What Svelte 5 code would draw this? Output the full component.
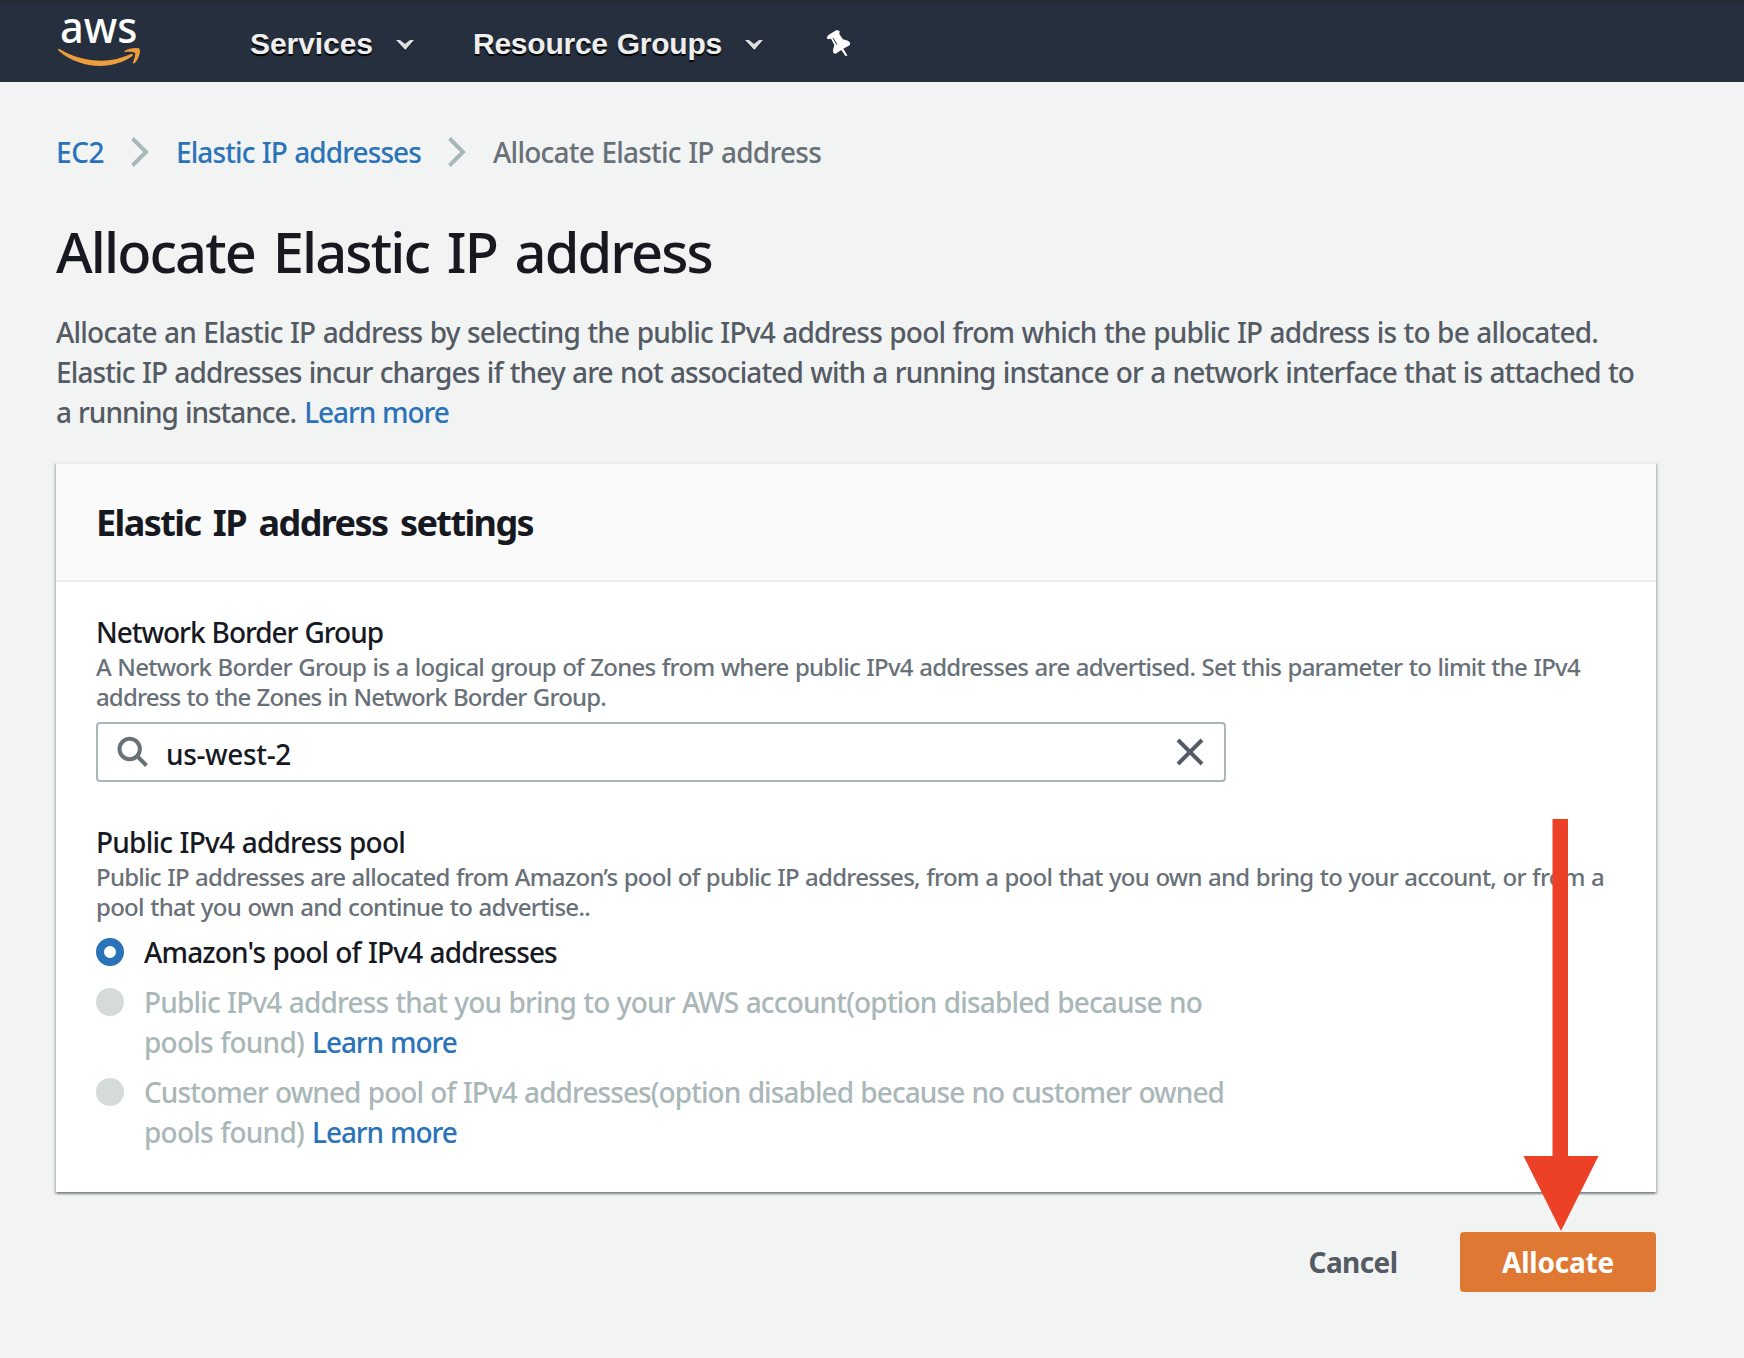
<script>
  const crumbs = [
    { text: 'EC2', track: -0.0167 },
    { text: 'Elastic IP addresses', track: -0.0322 },
  ];

  const intro = [
    { text: 'Allocate an Elastic IP address by selecting the public IPv4 address pool from which the public IP address is to be allocated.', track: -0.0285 },
    { text: 'Elastic IP addresses incur charges if they are not associated with a running instance or a network interface that is attached to', track: -0.0315 },
    { text: 'a running instance.', track: -0.037, link: true },
  ];

  const groupHint = [
    { text: 'A Network Border Group is a logical group of Zones from where public IPv4 addresses are advertised. Set this parameter to limit the IPv4', track: -0.0312 },
    { text: 'address to the Zones in Network Border Group.', track: -0.0356 },
  ];

  const poolHint = [
    { text: 'Public IP addresses are allocated from Amazon’s pool of public IP addresses, from a pool that you own and bring to your account, or from a', track: -0.0313 },
    { text: 'pool that you own and continue to advertise..', track: -0.0299 },
  ];

  const options = [
    { lines: [{ text: "Amazon's pool of IPv4 addresses", track: -0.0307 }] },
    {
      disabled: true,
      lines: [
        { text: 'Public IPv4 address that you bring to your AWS account(option disabled because no', track: -0.0301 },
        { text: 'pools found)', track: -0.0274, link: true },
      ],
    },
    {
      disabled: true,
      lines: [
        { text: 'Customer owned pool of IPv4 addresses(option disabled because no customer owned', track: -0.033 },
        { text: 'pools found)', track: -0.0274, link: true },
      ],
    },
  ];
</script>

{#snippet tracked(text, track)}<span style:letter-spacing="{track}em">{text}</span>{/snippet}

{#snippet lines(rows)}
  {#each rows as row}
    <span class="line">{@render tracked(row.text, row.track)}{#if row.link}{' '}<a class="more" href="#learn-more">Learn more</a>{/if}</span>
  {/each}
{/snippet}

{#snippet caret()}
  <svg class="caret" viewBox="0 0 54 36">
    <path class="under" d="M0 3H12L27 16L42 3H54L28 34Z" />
    <path d="M0 0H12L27 12L42 0H54L28 30Z" />
  </svg>
{/snippet}

<header class="topbar">
  <svg class="logo" viewBox="0 0 288 192" aria-label="aws">
    <text x="30" y="98" textLength="232" lengthAdjust="spacingAndGlyphs">aws</text>
    <path d="M24 118Q24 120 27 123C60 152 105 168 150 168C185 168 222 157 247 138C251 134 248 130 243 132C215 145 185 152 155 152C110 152 68 141 30 118Q25 115 24 118Z" />
    <path d="M223 124C235 114 262 112 268 116C273 122 267 148 253 160C250 162 248 160 249 157C252 149 258 133 255 129C252 125 236 125 227 126Q222 127 223 124Z" />
  </svg>
  <nav>
    <a class="menu" href="#services">{@render tracked('Services', -0.0019)}{@render caret()}</a>
    <a class="menu groups" href="#groups">{@render tracked('Resource Groups', -0.008)}{@render caret()}</a>
    <svg class="pin" viewBox="290 24 76 84">
      <path d="M292 50L297 42L322 27L331 30L330 39L341 55L356 59L363 66L361 73L342 83L354 103L352 106L348 104L336 87L319 98L312 96L311 87L315 72L305 53L296 55Z" />
      <path class="slit" d="M311 51L323 71" />
    </svg>
  </nav>
</header>

<main>
  <nav class="crumbs">
    {#each crumbs as crumb}
      <a href="#crumb">{@render tracked(crumb.text, crumb.track)}</a>
      <svg class="sep" viewBox="0 0 18 30"><path d="M1.5 1.5L15 15L1.5 28.5" /></svg>
    {/each}
    <span class="here">Allocate Elastic IP address</span>
  </nav>

  <h1>Allocate Elastic IP address</h1>

  <p class="desc">{@render lines(intro)}</p>

  <section class="panel">
    <h2>Elastic IP address settings</h2>
    <div class="body">
      <div class="label">{@render tracked('Network Border Group', -0.0368)}</div>
      <p class="hint">{@render lines(groupHint)}</p>
      <div class="field">
        <svg class="search" viewBox="0 0 32 32"><circle cx="12.7" cy="13" r="10.2" /><path d="M20 20L29.5 29.5" /></svg>
        <span class="value">us-west-2</span>
        <svg class="clear" viewBox="0 0 28 28"><path d="M2 2L26 26M26 2L2 26" /></svg>
      </div>

      <div class="label second">{@render tracked('Public IPv4 address pool', -0.0274)}</div>
      <p class="hint">{@render lines(poolHint)}</p>
      <div class="options">
        {#each options as option}
          <div class="option" class:off={option.disabled}>
            <i class="dot" class:on={!option.disabled}></i>
            <span>{@render lines(option.lines)}</span>
          </div>
        {/each}
      </div>
    </div>
  </section>

  <div class="actions">
    <button class="cancel">Cancel</button>
    <button class="primary">Allocate</button>
  </div>
</main>

<svg class="arrow" viewBox="0 0 76 413"><path d="M29.5 0H45V337H75.5L38 412L0.5 337H29.5Z" /></svg>

<style>
  :global(body) { background: #f2f4f3; }
  :global(#app) { position: relative; height: 1358px; overflow: hidden; font-family: 'Noto Sans', 'Open Sans', sans-serif; font-size: 28px; line-height: 40px; color: #16191f; font-weight: 500; word-spacing: 0.03em; }
  a { color: #2b73b9; text-decoration: none; }
  h1, h2, p { margin: 0; }
  svg { display: block; flex: none; }
  .line { display: block; white-space: nowrap; }
  .more { letter-spacing: -0.0393em; }

  .topbar { height: 82px; box-sizing: border-box; border-top: 2px solid #2a2a2b; background: #262f3e; display: flex; padding-left: 50px; }
  .logo { width: 96px; height: 64px; margin-top: 8px; fill: #ee9d3d; overflow: visible; }
  .logo text { fill: #fff; font-size: 130px; font-weight: 500; }
  .topbar nav { display: flex; align-items: center; padding-left: 104px; height: 80px; }
  .menu { display: flex; align-items: center; gap: 23px; margin-top: 3px; color: #eee; font: bold 30px/36px 'Liberation Sans', Arial, sans-serif; text-shadow: 0 2px 1px #000; white-space: nowrap; }
  .groups { margin-left: 59px; }
  .caret { width: 18px; height: 12px; margin-top: 5px; fill: #dedede; }
  .under { fill: #0e1116; }
  .pin { width: 25.3px; height: 28px; margin: 1px 0 0 63px; fill: #fff; }
  .slit { stroke: #262f3e; stroke-width: 3; }

  main { padding: 50px 88px 0 56px; }
  .crumbs { display: flex; align-items: center; gap: 27px; white-space: nowrap; }
  .sep { width: 18px; height: 30px; fill: none; stroke: #aab7b8; stroke-width: 4; }
  .here { color: #687078; letter-spacing: -0.0273em; }
  h1 { margin-top: 43px; font-size: 56px; line-height: 72px; font-weight: 500; white-space: nowrap; word-spacing: 0.09em; letter-spacing: -0.034em; }
  .desc { margin-top: 25px; color: #545b64; }

  .panel { margin-top: 30px; border-top: 2px solid #eaeded; background: #fff; box-shadow: 0 2px 2px rgba(0, 28, 36, 0.3), 2px 2px 2px rgba(0, 28, 36, 0.15), -2px 2px 2px rgba(0, 28, 36, 0.15); }
  h2 { height: 116px; display: flex; align-items: center; padding-left: 40px; background: #fafafa; border-bottom: 2px solid #eaeded; font-size: 36px; line-height: 45px; font-weight: 700; word-spacing: 0.13em; letter-spacing: -0.044em; }
  .body { padding: 30px 0 40px 40px; }
  .hint { font-size: 24px; line-height: 30px; color: #687078; }
  .field { box-sizing: border-box; width: 1130px; height: 60px; margin-top: 10px; border: 2px solid #aab7b8; border-radius: 4px; display: flex; align-items: center; padding: 0 20px 0 19px; }
  .search { width: 32px; height: 32px; fill: none; stroke: #687078; stroke-width: 4; }
  .value { flex: 1; padding: 3px 0 0 17px; letter-spacing: -0.0126em; }
  .clear { width: 28px; height: 28px; fill: none; stroke: #545b64; stroke-width: 4; }
  .second { margin-top: 40px; }
  .options { display: flex; flex-direction: column; gap: 10px; margin-top: 10px; }
  .option { display: flex; gap: 20px; }
  .off { color: #aab7b8; }
  .dot { box-sizing: border-box; flex: none; width: 28px; height: 28px; margin-top: 6px; border-radius: 50%; background: #d5dbdb; }
  .on { border: 8px solid #2b73b9; background: #fff; }

  .actions { display: flex; justify-content: flex-end; margin-top: 40px; }
  button { box-sizing: border-box; height: 60px; padding: 0; border: 0; border-radius: 4px; background: none; font: 700 28px/40px 'Noto Sans', sans-serif; color: #545b64; }
  .cancel { width: 170px; margin-right: 22px; letter-spacing: -0.0206em; }
  .primary { width: 196px; background: #df7833; color: #fff; letter-spacing: -0.0074em; }
  .arrow { position: absolute; left: 1522.5px; top: 819px; width: 76px; height: 413px; fill: #ec4127; }
</style>
